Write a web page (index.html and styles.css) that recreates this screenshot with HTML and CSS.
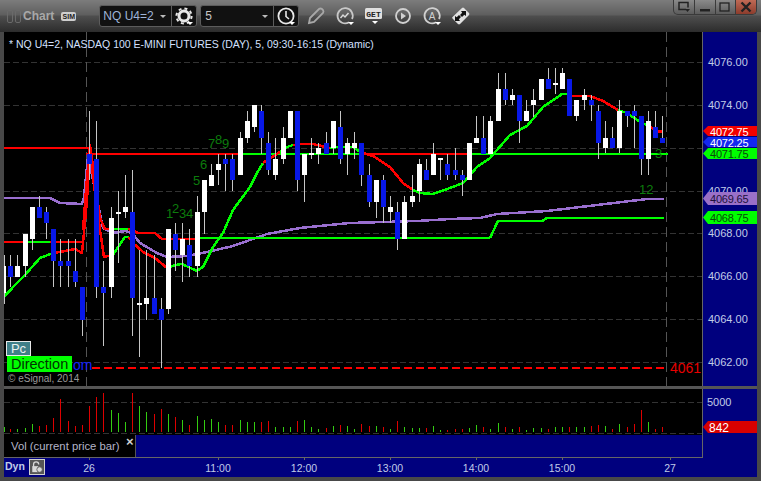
FILE: index.html
```html
<!DOCTYPE html>
<html lang="en">
<head>
<meta charset="utf-8">
<title>Chart</title>
<link rel="stylesheet" href="styles.css">
</head>
<body>
<div class="window">
  <header class="titlebar">
    <div class="links"><i></i><i></i></div>
    <span class="app-name">Chart</span>
    <span class="sim">SIM</span>
    <div class="combo combo-symbol">
      <span class="combo-value">NQ U4=2</span>
      <span class="caret"></span>
      <button class="combo-btn">
        <svg width="20" height="20" viewBox="0 0 20 20"><circle cx="10" cy="10" r="5" fill="none" stroke="#e8e8e8" stroke-width="3"/><circle cx="10" cy="10" r="7.600" fill="none" stroke="#e8e8e8" stroke-width="2" stroke-dasharray="3 3"/><path d="M13 16h6l-3 3z" fill="#fff"/></svg>
      </button>
    </div>
    <div class="combo combo-interval">
      <span class="combo-value">5</span>
      <span class="caret"></span>
      <button class="combo-btn">
        <svg width="20" height="20" viewBox="0 0 20 20"><circle cx="10" cy="10" r="7.600" fill="none" stroke="#e8e8e8" stroke-width="1.800"/><path d="M10 5v5.500l3 2.500" fill="none" stroke="#e8e8e8" stroke-width="1.600"/><path d="M13 16h6l-3 3z" fill="#fff"/></svg>
      </button>
    </div>
    <div class="tools">
      <svg width="20" height="20" viewBox="0 0 20 20"><path d="M3 17l1-5L13 3q1.500-1 3 0l1 1q1 1.500 0 3l-9 9z" fill="none" stroke="#a8a8a8" stroke-width="1.800"/></svg>
      <svg width="20" height="20" viewBox="0 0 20 20"><path d="M14 16.300A7.600 7.600 0 1 1 17 13" fill="none" stroke="#c8c8c8" stroke-width="1.800"/><path d="M5.500 12l2.500-3 2 2 3.500-4" fill="none" stroke="#d8d8d8" stroke-width="1.500"/><path d="M13 16h6l-3 3z" fill="#fff"/></svg>
      <svg width="20" height="20" viewBox="0 0 20 20"><rect x="1" y="2" width="17" height="11" rx="1.500" fill="#e0e0e0"/><text x="9.500" y="11" class="get-text">GET</text><path d="M8 15h6l-3 3z" fill="#fff"/></svg>
      <svg width="20" height="20" viewBox="0 0 20 20"><circle cx="10" cy="10" r="7" fill="none" stroke="#d0d0d0" stroke-width="1.800"/><path d="M8 6.500l5 3.500-5 3.500z" fill="#d0d0d0"/></svg>
      <svg width="20" height="20" viewBox="0 0 20 20"><path d="M14 16.300A7.600 7.600 0 1 1 17 13" fill="none" stroke="#d0d0d0" stroke-width="1.800"/><text x="10" y="14" class="a-text">A</text><path d="M13 16h6l-3 3z" fill="#fff"/></svg>
      <svg width="20" height="20" viewBox="0 0 20 20"><path d="M1.500 11L11 2q1-.8 2 0l5 5q.8 1 0 2L9 18q-1 .8-2 0l-5.500-5.500q-.8-.8 0-1.500z" fill="#e0e0e0"/><path d="M10 5h5v5l-1.700-1.200-2.300 2.200-2-2 2.200-2.300zM4 10l1.700 1.200L8 9l2 2-2.200 2.300L9 15H4z" fill="#111"/></svg>
    </div>
    <div class="win-controls">
      <button class="win-btn"><svg width="14" height="12" viewBox="0 0 14 12"><path d="M9 8.500H2V1.500h9v5" fill="none" stroke="#222" stroke-width="1.500"/><path d="M8 8h5l-2.500 3z" fill="#222"/></svg></button>
      <button class="win-btn"><svg width="14" height="12" viewBox="0 0 14 12"><rect x="2" y="8" width="10" height="2.500" fill="#222"/></svg></button>
      <button class="win-btn"><svg width="14" height="12" viewBox="0 0 14 12"><rect x="2" y="2" width="9" height="8" fill="none" stroke="#222" stroke-width="1.300"/></svg></button>
      <button class="win-btn win-close"><svg width="14" height="12" viewBox="0 0 14 12"><path d="M2.500 1.500l9 9M11.500 1.500l-9 9" stroke="#222" stroke-width="2.400"/></svg></button>
    </div>
  </header>

  <section class="row row-price">
    <div class="plot">
      <svg id="price" class="plot-svg" width="698" height="354" viewBox="4 32 698 354"></svg>
      <div class="plot-overlay">
        <span class="pc">Pc</span>
        <div class="direction-line"><span class="direction">Direction</span><span class="om">om</span></div>
        <span class="copyright">© eSignal, 2014</span>
      </div>
    </div>
    <svg class="axis-svg" width="54" height="354" viewBox="703 32 54 354">
      <g class="axis-text">
        <text x="708" y="66">4076.00</text>
        <text x="708" y="109">4074.00</text>
        <text x="708" y="195">4070.00</text>
        <text x="708" y="237">4068.00</text>
        <text x="708" y="280">4066.00</text>
        <text x="708" y="323">4064.00</text>
        <text x="708" y="366">4062.00</text>
      </g>
      <g class="flags">
        <polygon points="703,131 708,126 757,126 757,136 708,136" fill="#f40000"/>
        <text x="710" y="135.500" fill="#ffffff">4072.75</text>
        <polygon points="703,142 708,137 757,137 757,147 708,147" fill="#1428f0"/>
        <text x="710" y="146.500" fill="#ffffff">4072.25</text>
        <polygon points="703,153.500 708,148 757,148 757,159 708,159" fill="#00ff00"/>
        <text x="710" y="158" fill="#0a4a0a">4071.75</text>
        <polygon points="703,198.500 708,192 757,192 757,205 708,205" fill="#9a70c8"/>
        <text x="710" y="203" fill="#20103a">4069.65</text>
        <polygon points="703,217.500 708,211 757,211 757,224 708,224" fill="#00ff00"/>
        <text x="710" y="222" fill="#0a4a0a">4068.75</text>
      </g>
    </svg>
  </section>

  <section class="row row-volume">
    <div class="plot">
      <svg id="volume" class="plot-svg" width="698" height="46" viewBox="4 389 698 46"></svg>
    </div>
    <svg class="axis-svg" width="54" height="46" viewBox="703 389 54 46">
      <text x="707" y="406" class="axis-text">5000</text>
      <polygon points="703,427 708,421 757,421 757,433 708,433" fill="#d80000"/>
      <text x="709" y="431.500" class="flag-vol">842</text>
    </svg>
  </section>

  <section class="row row-tabs">
    <div class="plot tabs">
      <div class="tab">Vol (current price bar)<span class="tab-close">×</span></div>
    </div>
    <div class="axis-blank"></div>
  </section>

  <footer class="timebar">
    <span class="dyn">Dyn</span>
    <span class="lock">
      <svg width="12" height="12" viewBox="0 0 14 14"><path d="M3 7V4q0-3 3-3t3 3" fill="none" stroke="#d8d8d8" stroke-width="1.500"/><rect x="1.500" y="6" width="7" height="7" fill="#d8d8d8"/><circle cx="10" cy="10" r="3.200" fill="#d8d8d8" stroke="#555"/></svg>
    </span>
    <svg class="time-svg" width="753" height="20" viewBox="4 457 753 20">
      <path class="time-line" d="M4 457.500H703M89.500 457v3M218.500 457v3M304.500 457v3M390.500 457v3M476.500 457v3M562.500 457v3M670.500 457v3"/>
      <g class="time-text">
        <text x="89" y="472">26</text>
        <text x="218" y="472">11:00</text>
        <text x="304" y="472">12:00</text>
        <text x="390" y="472">13:00</text>
        <text x="476" y="472">14:00</text>
        <text x="562" y="472">15:00</text>
        <text x="670" y="472">27</text>
      </g>
    </svg>
  </footer>
</div>
<script src="chart.js"></script>
</body>
</html>
```
FILE: styles.css
```css
* { box-sizing: border-box; }
html, body { margin: 0; padding: 0; background: #484848; }
body { font-family: "Liberation Sans", Arial, sans-serif; overflow: hidden; }
button { padding: 0; margin: 0; border: 0; background: none; }
svg { display: block; }

.window {
  width: 761px;
  height: 481px;
  display: flex;
  flex-direction: column;
  padding: 0 4px 4px 4px;
  background: #484848;
}

/* Title bar */
.titlebar {
  height: 32px;
  flex: none;
  display: flex;
  align-items: center;
  margin: 0 -4px;
  padding-left: 7px;
  background: linear-gradient(#7c7c7c 0, #5e5e5e 15px, #4e4e4e 16px, #2c2c2c 32px);
}
.links { display: flex; gap: 2px; }
.links i { width: 6px; height: 13px; border: 1px solid #6a6a6a; border-radius: 2px; }
.app-name { margin-left: 2px; font-size: 12px; font-weight: bold; color: #a8a8a8; }
.sim {
  margin-left: 7px;
  width: 15px;
  height: 9px;
  font-size: 7px;
  line-height: 9px;
  font-weight: bold;
  text-align: center;
  border-radius: 2px;
  background: #cfcfcf;
  color: #222;
}
.combo {
  height: 22px;
  display: flex;
  align-items: center;
  border: 1px solid #5c5c5c;
  border-radius: 3px;
  background: #111;
}
.combo-symbol { margin-left: 23px; width: 98px; }
.combo-interval { margin-left: 3px; width: 99px; }
.combo-value { flex: 1; padding-left: 3px; font-size: 12px; color: #9fb4d8; }
.combo-interval .combo-value { padding-left: 4px; color: #c8c8c8; }
.caret {
  margin-right: 5px;
  border: 3px solid transparent;
  border-top: 3px solid #bbb;
  border-bottom: 0;
}
.combo-btn {
  width: 25px;
  height: 20px;
  display: flex;
  justify-content: center;
  border-left: 1px solid #5c5c5c;
}
.tools { display: flex; gap: 9px; margin-left: 7px; }
.get-text { font: bold 8px "Liberation Mono", monospace; fill: #222; text-anchor: middle; }
.a-text { font: 10px "Liberation Sans", Arial, sans-serif; fill: #d0d0d0; text-anchor: middle; }
.win-controls {
  margin-left: auto;
  margin-right: 4px;
  align-self: flex-start;
  width: 84px;
  height: 15px;
  display: flex;
  border: 1px solid #3a3a3a;
  border-top: 0;
  border-radius: 0 0 5px 5px;
  overflow: hidden;
  background: linear-gradient(#8a8a8a, #5c5c5c);
}
.win-btn { flex: 1; display: flex; justify-content: center; align-items: center; border-right: 1px solid #3a3a3a; }
.win-close { border-right: 0; background: linear-gradient(#c06a55, #8c3c2c); }

/* Panes */
.row { display: flex; flex: none; }
.row-price { height: 354px; }
.row-volume { height: 49px; padding-top: 3px; background: #555; }
.row-tabs { height: 22px; }
.plot { position: relative; width: 699px; background: #000; border-right: 1px solid #666; }
.axis-svg { background: #00007e; }
.axis-blank { width: 54px; background: #00007e; }
.axis-text text, .axis-text { font-size: 11px; fill: #c0cce8; }
.flags text { font-size: 11px; letter-spacing: -0.2px; }
.flag-vol { font-size: 12px; fill: #fff; }

/* Chart elements */
.title-text { font-size: 10.500px; fill: #d4e0ff; }
.grid { stroke: #333; stroke-width: 1; stroke-dasharray: 6 3; fill: none; shape-rendering: crispEdges; }
.session { stroke: #555; stroke-width: 1; stroke-dasharray: 10 5; fill: none; shape-rendering: crispEdges; }
.wick { fill: #c6c6c6; shape-rendering: crispEdges; }
.up { fill: #ffffff; shape-rendering: crispEdges; }
.down { fill: #0818e8; shape-rendering: crispEdges; }
.line { fill: none; stroke-width: 2.500; stroke-linejoin: round; shape-rendering: crispEdges; }
.step { fill: none; stroke-width: 2; shape-rendering: crispEdges; }
.red { stroke: #ff0000; }
.green { stroke: #00ff00; }
.purple { stroke: #9a6fd0; }
.stop { fill: none; stroke: #ff0000; stroke-width: 2; stroke-dasharray: 8 4; shape-rendering: crispEdges; }
.count { font-size: 13px; fill: #0c7c0c; }
.stop-label { font-size: 14px; fill: #e80000; }
.vol-up { fill: #33cc11; shape-rendering: crispEdges; }
.vol-down { fill: #dd0000; shape-rendering: crispEdges; }

/* Overlays on the plot */
.plot-overlay {
  position: absolute;
  left: 2px;
  top: 309px;
  display: flex;
  flex-direction: column;
  align-items: flex-start;
}
.pc {
  width: 25px;
  height: 15px;
  border: 1px solid #e8e8e8;
  background: #3f7f88;
  color: #e8f0f0;
  font-size: 13px;
  line-height: 13px;
  text-align: center;
}
.direction-line { display: flex; align-items: flex-end; margin-left: 1px; }
.direction {
  width: 65px;
  height: 16px;
  padding-left: 4px;
  background: #00ff00;
  color: #003400;
  font-size: 14.500px;
  line-height: 16px;
}
.om { margin-left: 1px; font-size: 14px; line-height: 13px; color: #1020ff; }
.copyright { margin: 1px 0 0 2px; font-size: 10px; line-height: 12px; color: #9a9a9a; }

/* Tab strip */
.tabs { background: #00007e; }
.tab {
  position: relative;
  width: 132px;
  height: 22px;
  padding: 5px 0 0 7px;
  background: #000;
  border-right: 1px solid #555;
  color: #b4b4c8;
  font-size: 11.300px;
}
.tab-close {
  position: absolute;
  left: 122px;
  top: -1px;
  color: #d0d0d0;
  font-size: 13px;
  font-weight: bold;
}

/* Time axis */
.timebar {
  position: relative;
  flex: none;
  height: 20px;
  background: #00007e;
}
.time-svg { position: absolute; left: 0; top: 0; }
.time-line { stroke: #666; fill: none; shape-rendering: crispEdges; }
.time-text text { font-size: 10.500px; fill: #c0cce8; text-anchor: middle; }
.dyn {
  position: absolute;
  left: 1px;
  top: 3px;
  z-index: 1;
  font-size: 10.500px;
  font-weight: bold;
  color: #c0cce8;
}
.lock {
  position: absolute;
  left: 25px;
  top: 2px;
  z-index: 1;
  width: 16px;
  height: 16px;
  padding: 1px;
  border: 1px solid #cfcfcf;
  background: #555;
}
```
FILE: chart.js
```js
var NS = 'http://www.w3.org/2000/svg';

function el(parent, tag, attrs, text) {
  var node = document.createElementNS(NS, tag);
  for (var k in attrs) node.setAttribute(k, attrs[k]);
  if (text !== undefined) node.textContent = text;
  parent.appendChild(node);
  return node;
}
function barX(i) { return Math.max(4, Math.floor(3.6 + 7.167 * i)); }

/* wick top, wick bottom, body top, body bottom, u = white / d = blue */
var candles = [
  [255,304,266,293,'u'],[255,287,266,277,'d'],[255,277,266,277,'u'],[234,277,234,266,'u'],[207,250,207,239,'u'],
  [196,218,207,218,'d'],[207,239,212,223,'d'],[229,287,229,261,'d'],[239,287,261,266,'d'],[239,287,261,266,'d'],
  [239,287,271,282,'d'],[287,336,287,320,'d'],[111,180,154,164,'d'],[121,298,159,287,'d'],[261,346,287,293,'d'],
  [207,298,218,287,'u'],[191,263,212,214,'u'],[175,218,207,212,'u'],[170,336,212,298,'d'],[250,357,303,305,'u'],
  [250,320,298,304,'u'],[255,314,298,314,'d'],[298,368,309,320,'d'],[229,314,229,309,'u'],[223,271,234,250,'d'],
  [223,282,239,255,'u'],[229,277,245,266,'d'],[196,277,212,266,'u'],[180,234,180,212,'u'],[164,186,175,186,'u'],
  [154,185,164,170,'u'],[154,191,159,164,'d'],[154,191,159,180,'d'],[132,175,138,175,'u'],[111,143,121,138,'u'],
  [105,132,105,127,'u'],[105,154,111,138,'d'],[132,175,143,170,'d'],[138,180,159,175,'u'],[127,164,138,159,'u'],
  [111,138,111,138,'u'],[111,191,111,180,'d'],[154,202,154,175,'u'],[138,159,153,155,'u'],[143,164,148,154,'u'],
  [132,154,143,154,'d'],[121,154,121,148,'u'],[111,164,127,159,'d'],[138,175,143,154,'u'],[132,159,143,148,'u'],
  [143,186,143,175,'d'],[164,207,175,202,'d'],[180,218,180,202,'u'],[175,223,180,207,'d'],[196,223,207,212,'u'],
  [202,250,212,239,'d'],[196,239,202,239,'u'],[175,207,196,202,'u'],[159,202,164,191,'u'],[159,180,170,180,'d'],
  [143,175,154,175,'u'],[160,180,158,160,'u'],[154,180,164,175,'d'],[148,180,170,175,'d'],[170,196,175,180,'d'],
  [143,180,143,180,'u'],[116,143,138,143,'u'],[116,154,138,154,'d'],[116,154,121,154,'u'],[73,121,89,121,'u'],
  [73,105,89,100,'d'],[89,105,95,100,'u'],[95,143,95,121,'d'],[100,121,111,121,'u'],[89,117,100,105,'u'],
  [79,100,79,100,'u'],[68,89,79,89,'d'],[68,94,83,85,'u'],[68,89,73,89,'u'],[79,116,79,116,'d'],
  [100,121,100,116,'u'],[89,110,95,100,'u'],[95,121,100,105,'d'],[105,159,111,143,'d'],[121,153,138,148,'u'],
  [127,148,138,148,'d'],[100,153,111,148,'u'],[111,127,111,116,'d'],[105,148,111,116,'d'],[116,175,116,159,'d'],
  [111,175,121,159,'u'],[111,138,127,138,'d'],[116,143,138,143,'d']
];

/* bar height, r = red / g = green */
var volumes = [
  [5,'g'],[3,'r'],[3,'g'],[4,'g'],[8,'g'],[6,'r'],[7,'r'],[14,'r'],[33,'r'],[11,'r'],[6,'r'],[7,'r'],[26,'r'],[35,'r'],[39,'r'],
  [22,'g'],[19,'g'],[10,'g'],[39,'r'],[26,'g'],[20,'g'],[18,'r'],[23,'r'],[18,'g'],[15,'r'],[12,'g'],[7,'r'],[16,'g'],[12,'g'],
  [13,'g'],[10,'g'],[7,'r'],[7,'r'],[12,'g'],[10,'g'],[10,'g'],[10,'r'],[11,'r'],[5,'g'],[5,'g'],[5,'g'],[11,'r'],[12,'g'],
  [5,'g'],[3,'g'],[4,'r'],[6,'g'],[7,'r'],[6,'g'],[3,'g'],[8,'r'],[6,'r'],[6,'g'],[5,'r'],[3,'g'],[11,'r'],[5,'g'],[4,'g'],
  [4,'g'],[4,'r'],[6,'g'],[2,'g'],[2,'r'],[3,'r'],[3,'r'],[4,'g'],[7,'g'],[5,'r'],[3,'g'],[9,'g'],[5,'r'],[3,'g'],[5,'r'],
  [2,'g'],[4,'g'],[4,'g'],[3,'r'],[5,'g'],[5,'g'],[5,'r'],[5,'g'],[5,'g'],[6,'r'],[7,'r'],[6,'g'],[3,'r'],[8,'g'],[5,'r'],
  [8,'r'],[22,'r'],[10,'g'],[3,'r'],[5,'r']
];

/* Lines: [class, points] */
var lines = [
  ['step red','4,148 89,148'],
  ['step red','4,242 28,242'],['step green','28,242 50,242'],['step red','50,242 83,242'],
  ['step red','86,154 238,154'],['step green','238,154 362,154'],['step red','362,154 470,154'],['step green','470,154 668,154'],
  ['line purple','4,198 50,198 60,203 82,204 84,197 88,157 93,180 103,228 113,233 125,231 132,233 140,243 157,253 167,257 187,256 207,252 233,246 250,240 267,234 300,228 350,223 417,221 450,219 480,218 497,214 547,211 597,205 647,199 664,199'],
  ['line red','83,230 86,190 90,145 100,218 105,229 113,229'],
  ['line green','113,229 128,229'],
  ['line red','128,229 133,230 138,233 155,233 162,239 195,239'],
  ['step green','195,238 490,238'],
  ['line green','490,238 498,221 542,221 547,218 664,218'],
  ['line green','4,297 15,285 25,275 40,258 53,253'],
  ['line red','53,253 60,252 75,249 82,253 83,243 87,200 90,145 93,177 100,230 104,257 108,256 113,255'],
  ['line green','113,255 118,247 125,237 129,237'],
  ['line red','129,237 133,243 143,252 155,258 167,268'],
  ['line green','167,268 175,265 182,264 197,271 203,267 213,247 223,233 233,210 250,187 257,173 263,163'],
  ['line red','263,163 272,157 280,152'],
  ['line green','280,152 287,147 293,145'],
  ['line red','293,145 300,144 313,144 330,148'],
  ['line green','330,148 338,147 353,147 360,152'],
  ['line red','360,152 373,156 390,167 403,183 413,190'],
  ['line green','413,190 420,193 433,194 450,188 463,183 477,167 490,158 510,135 527,126 543,107 562,94 567,94'],
  ['line red','567,94 573,96 590,96 603,101 618,110'],
  ['line green','618,110 627,113 637,120 650,127'],
  ['line red','650,127 657,131 663,132']
];

/* Price pane */
var price = document.getElementById('price');
[62,105,148,191,233,276,319,362].forEach(function (y) {
  el(price, 'line', {class:'grid', x1:4, x2:702, y1:y+0.5, y2:y+0.5});
});
[86,666].forEach(function (x) {
  el(price, 'line', {class:'session', x1:x+0.5, x2:x+0.5, y1:32, y2:386});
});
lines.forEach(function (l) { el(price, 'polyline', {class:l[0], points:l[1]}); });
el(price, 'line', {class:'stop', x1:92, x2:664, y1:368, y2:368});
candles.forEach(function (c, i) {
  var x = barX(i);
  el(price, 'rect', {class:'wick', x:x, y:c[0], width:1, height:c[1]-c[0]});
  var left = i === 0 ? 4 : x - 2;
  el(price, 'rect', {class:c[4] === 'u' ? 'up' : 'down', x:left, y:c[2], width:i === 0 ? 2 : 5, height:c[3]-c[2]});
});
el(price, 'text', {class:'title-text', x:9, y:48}, '* NQ U4=2, NASDAQ 100 E-MINI FUTURES (DAY), 5, 09:30-16:15 (Dynamic)');
[['1',166,218],['2',172,213],['3',179,218],['4',186,218],['5',193,185],['6',200,169],['7',208,148],['8',215,144],['9',222,148],['12',639,194],['3',655,158]].forEach(function (t) {
  el(price, 'text', {class:'count', x:t[1], y:t[2]}, t[0]);
});
el(price, 'text', {class:'stop-label', x:670, y:373}, '4061');

/* Volume pane */
var volume = document.getElementById('volume');
[402,433].forEach(function (y) {
  el(volume, 'line', {class:'grid', x1:4, x2:702, y1:y+0.5, y2:y+0.5});
});
volumes.forEach(function (v, i) {
  el(volume, 'rect', {class:v[1] === 'r' ? 'vol-down' : 'vol-up', x:barX(i), y:432-v[0], width:1, height:v[0]});
});
```
